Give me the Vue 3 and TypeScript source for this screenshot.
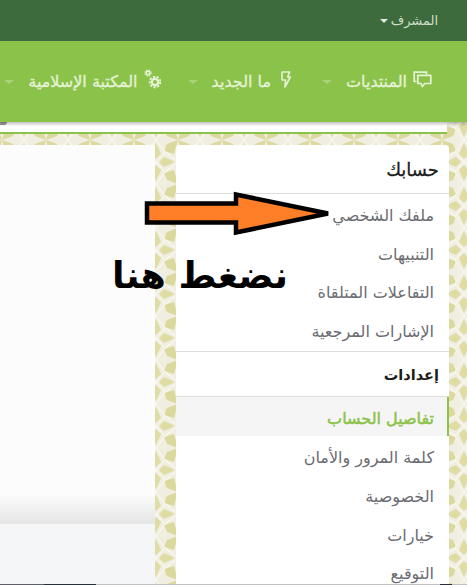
<script setup lang="ts">
const accountLinks = ['ملفك الشخصي', 'التنبيهات', 'التفاعلات المتلقاة', 'الإشارات المرجعية']
const settingsLinks = ['كلمة المرور والأمان', 'الخصوصية', 'خيارات', 'التوقيع']
</script>

<template>
  <div class="page" dir="rtl">
    <svg class="bg" width="467" height="585" aria-hidden="true">
      <defs>
        <pattern id="tile" width="44" height="44" patternUnits="userSpaceOnUse" x="2" y="8">
          <rect width="44" height="44" fill="#f0eee0" />
          <path d="M22 3L27 14L22 19L17 14Z M22 41L27 30L22 25L17 30Z M3 22L14 17L19 22L14 27Z M41 22L30 17L25 22L30 27Z" fill="#dfdca4" />
          <path d="M0 0L11 4L14 11L4 14Z M44 0L33 4L30 11L40 14Z M0 44L11 40L14 33L4 30Z M44 44L33 40L30 33L40 30Z" fill="#dcd99f" />
          <path d="M22 0L31 12L44 22L31 32L22 44L13 32L0 22L13 12Z M13 12L31 32 M31 12L13 32" fill="none" stroke="#f8f6ec" stroke-width="1.600" />
        </pattern>
      </defs>
      <rect width="467" height="585" fill="url(#tile)" />
    </svg>

    <header class="topbar">
      <span class="user">المشرف</span>
      <i class="caret"></i>
    </header>

    <nav class="nav">
      <a class="tab">
        <svg class="ico" width="19" height="17" viewBox="0 0 19 17">
          <path d="M3.500 10.500H1.200V1.200H13.500V3.500" fill="none" stroke="currentColor" stroke-width="1.700" />
          <path d="M4.800 4.400H17.800V12.500H11.800L9.300 15.500L8 12.500H4.800Z" fill="none" stroke="currentColor" stroke-width="1.700" stroke-linejoin="round" />
        </svg>
        <span>المنتديات</span>
        <i class="tab-caret"></i>
      </a>
      <a class="tab">
        <svg class="ico bolt" width="10" height="17" viewBox="0 0 10 17">
          <path d="M1 1H8.600L6.700 6H9.400L4 16L4.600 9H1Z" fill="none" stroke="currentColor" stroke-width="1.600" stroke-linejoin="round" />
        </svg>
        <span>ما الجديد</span>
        <i class="tab-caret"></i>
      </a>
      <a class="tab">
        <svg class="ico cogs" width="18" height="20" viewBox="0 0 18 20">
          <circle cx="4" cy="4" r="1.700" fill="none" stroke="currentColor" stroke-width="1.500" />
          <circle cx="4" cy="4" r="3" fill="none" stroke="currentColor" stroke-width="1.300" stroke-dasharray="1.400 1" />
          <circle cx="11" cy="13" r="3.200" fill="none" stroke="currentColor" stroke-width="2.400" />
          <circle cx="11" cy="13" r="5.300" fill="none" stroke="currentColor" stroke-width="1.900" stroke-dasharray="2.200 1.500" />
        </svg>
        <span>المكتبة الإسلامية</span>
        <i class="tab-caret"></i>
      </a>
    </nav>

    <div class="strip-wrap">
      <div class="strip"></div>
    </div>

    <main class="main">
      <aside class="side">
        <h3 class="head first">حسابك</h3>
        <a v-for="link in accountLinks" :key="link" class="row">{{ link }}</a>
        <h3 class="head second">إعدادات</h3>
        <a class="row active">تفاصيل الحساب</a>
        <a v-for="link in settingsLinks" :key="link" class="row">{{ link }}</a>
      </aside>
      <section class="content">
        <div class="content-top"></div>
        <div class="content-foot"></div>
      </section>
    </main>

    <div class="bottom-line"></div>

    <svg class="arrow" width="190" height="46" viewBox="0 0 190 46" aria-hidden="true">
      <path d="M3 12.500H92V3.500L184 22.500L92 41.500V31.500H3Z" fill="#fe7f27" stroke="#000" stroke-width="4.500" stroke-linejoin="miter" />
    </svg>
    <div class="note">نضغط هنا</div>
  </div>
</template>

<style>
html,
body {
  margin: 0;
  overflow: hidden;
}
</style>

<style scoped>
.page {
  position: relative;
  width: 467px;
  height: 585px;
  overflow: hidden;
  font-family: "DejaVu Sans", "Noto Sans", sans-serif;
}

.bg {
  position: absolute;
  inset: 0;
}

.topbar {
  position: relative;
  height: 41px;
  background: #3e6b3d;
  display: flex;
  align-items: center;
  gap: 3px;
  padding-right: 29px;
  color: #cfdfc9;
  font-size: 13px;
}

.caret {
  border-top: 4px solid #e3ece0;
  border-left: 4px solid transparent;
  border-right: 4px solid transparent;
}

.nav {
  position: relative;
  height: 81px;
  background: #8bc34a;
  display: flex;
  align-items: center;
  gap: 29px;
  padding-right: 35px;
  color: #e6f2d6;
  font-size: 16px;
  white-space: nowrap;
  box-shadow: 0 2px 3px rgba(0, 0, 0, 0.25);
  z-index: 2;
}

.tab {
  display: flex;
  align-items: center;
  gap: 6px;
}

.tab:first-child {
  margin-left: 2px;
}

.tab:nth-child(2) {
  margin-left: -3px;
}

.tab span {
  -webkit-text-stroke: 0.3px currentColor;
}

.ico {
  margin-top: -4px;
}

.ico.bolt {
  margin-left: 4px;
}

.ico.cogs {
  margin-top: -6px;
}

.tab-caret {
  margin-right: 8px;
  border-top: 4px solid #a9d27a;
  border-left: 5px solid transparent;
  border-right: 5px solid transparent;
}

.strip-wrap {
  position: relative;
  height: 12px;
  padding-right: 20px;
}

.strip {
  position: relative;
  height: 10px;
  background: #fff;
  border-bottom: 2px solid #8bc34a;
}

.strip::before {
  content: "";
  position: absolute;
  left: 0;
  top: 0;
  width: 7px;
  height: 3px;
  background: #9a9a98;
  border-radius: 0 0 4px 0;
}

.main {
  position: relative;
  display: flex;
  gap: 21px;
  margin-top: 11px;
  padding-right: 18px;
}

.side {
  width: 273px;
  flex: none;
  height: 445px;
  background: #fff;
  border-radius: 4px 4px 0 0;
  overflow: hidden;
}

.head {
  margin: 0;
  padding-right: 10px;
  font-size: 14.500px;
  font-weight: 700;
  color: #1c1c1c;
  border-bottom: 1px solid #dedede;
}

.head.first {
  height: 48px;
  line-height: 50px;
  font-size: 18px;
  font-weight: 400;
  -webkit-text-stroke: 0.3px currentColor;
}

.head.second {
  height: 44px;
  line-height: 47px;
  border-top: 1px solid #dedede;
  margin-top: 3px;
}

.row {
  display: block;
  height: 38.600px;
  line-height: 44px;
  padding-right: 15px;
  font-size: 16px;
  color: #6b6c72;
  white-space: nowrap;
}

.row.active {
  height: 39px;
  line-height: 43px;
  background: #f5f5f5;
  border-right: 2px solid #8bc34a;
  padding-right: 13px;
  -webkit-text-stroke: 0.5px currentColor;
  color: #8bc34a;
}

.content {
  flex: 1;
  height: 440px;
  background: #fcfcfc;
  display: flex;
  flex-direction: column;
}

.content-top {
  flex: 1;
  background: linear-gradient(to bottom, #fcfcfc 92%, #e5e5e6);
}

.content-foot {
  height: 61px;
  background: #f5f6f8;
}

.bottom-line {
  position: absolute;
  left: 0;
  right: 0;
  bottom: 0;
  height: 1px;
  background: linear-gradient(to right, #5c6066 44px, #26303c 44px, #26303c 96px, #bfc0c0 96px, #bfc0c0 440px, #26303c 440px, #26303c 452px, #bfc0c0 452px);
}

.arrow {
  position: absolute;
  left: 144px;
  top: 191px;
}

.note {
  position: absolute;
  left: 112px;
  top: 252px;
  font-size: 36.500px;
  font-weight: 700;
  line-height: 48px;
  color: #000;
  white-space: nowrap;
}
</style>
